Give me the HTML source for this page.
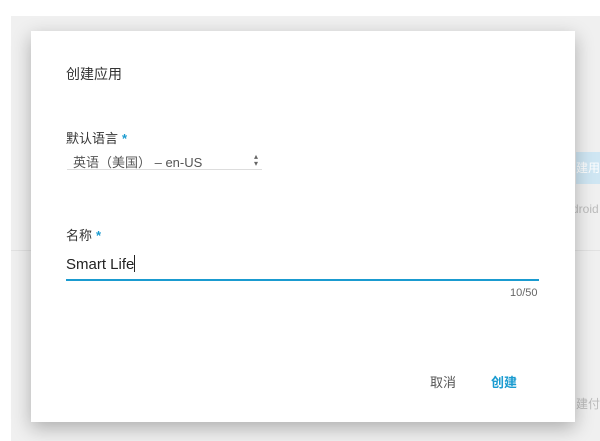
<!DOCTYPE html><html><head><meta charset="utf-8"><style>
body{margin:0;width:600px;height:441px;background:#fff;position:relative;overflow:hidden;font-family:"Liberation Sans","Noto Sans CJK SC",sans-serif}
.bg{position:absolute;left:11px;top:16px;width:589px;height:425px;background:#f0f0f0}
.line{position:absolute;left:11px;top:250px;width:589px;height:1px;background:#e2e2e2}
.btn{position:absolute;left:576px;top:152px;width:24px;height:32px;background:#cfe6f3;color:#fff;font-size:12px;line-height:32px}
.dlg{position:absolute;left:31px;top:31px;width:544px;height:391px;background:#fff;box-shadow:0 6px 18px rgba(0,0,0,.28)}
.t{position:absolute;color:#333;white-space:nowrap}
.star{color:#1a9bd0;font-weight:bold;margin-left:4px}
</style></head><body>
<div class="bg"></div><div class="line"></div><div class="btn">建用</div>
<div class="t" style="left:572px;top:202px;font-size:12px;color:#bbb">droid</div>
<div class="t" style="left:576px;top:395px;font-size:12px;color:#bbb">建付</div>
<div class="dlg"></div>
<div class="t" style="left:66px;top:64px;font-size:14px">创建应用</div>
<div class="t" style="left:66px;top:128px;font-size:13px">默认语言<span class="star">*</span></div>
<div class="t" style="left:73px;top:152px;font-size:13px;color:#555">英语（美国） – en-US</div>
<div class="t" style="left:254px;top:153px;font-size:8px;color:#666;line-height:7px">▴<br>▾</div>
<div style="position:absolute;left:67px;top:169px;width:195px;height:1px;background:#ddd"></div>
<div class="t" style="left:66px;top:225px;font-size:13px">名称<span class="star">*</span></div>
<div class="t" style="left:66px;top:255px;font-size:15px;color:#222">Smart Life<span style="display:inline-block;width:1px;height:17px;background:#222;vertical-align:-3px"></span></div>
<div style="position:absolute;left:66px;top:279px;width:473px;height:2px;background:#1a9bd0"></div>
<div class="t" style="left:510px;top:287px;font-size:11px;color:#666">10/50</div>
<div class="t" style="left:430px;top:372px;font-size:13px;color:#555">取消</div>
<div class="t" style="left:491px;top:372px;font-size:13px;color:#1a9bd0;font-weight:bold">创建</div>
</body></html>
